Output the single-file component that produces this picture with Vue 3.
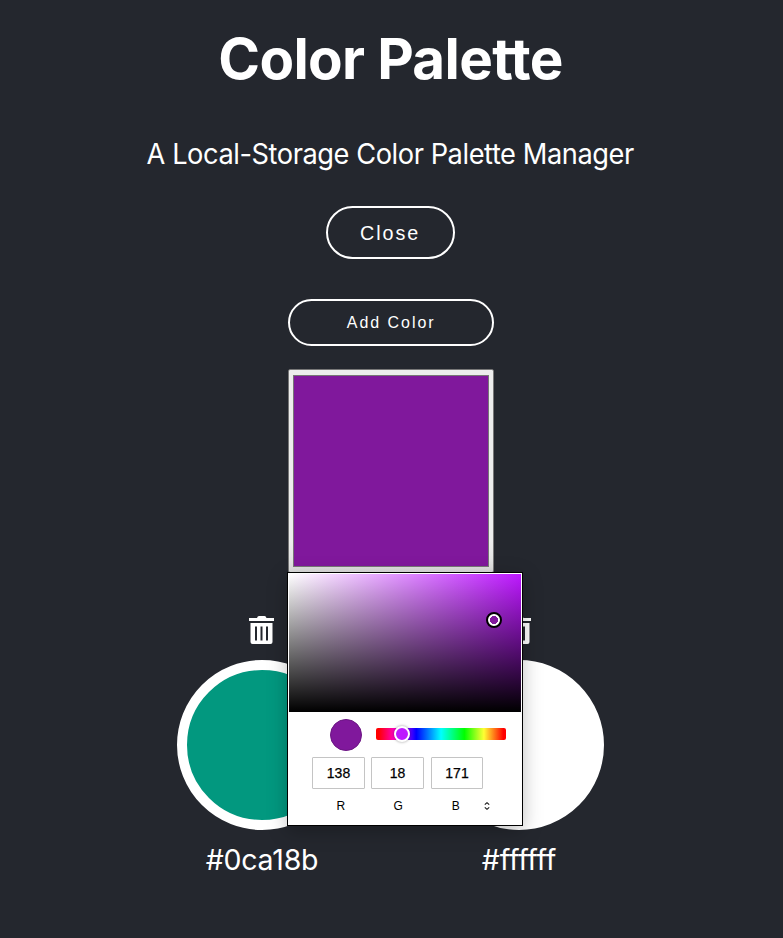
<script setup>
import { ref } from 'vue'

const cards = ref([
  { name: '#0ca18b', fill: '#02987f' },
  { name: '#ffffff', fill: '#ffffff' }
])
const channels = ref([
  { label: 'R', value: 138 },
  { label: 'G', value: 18 },
  { label: 'B', value: 171 }
])
</script>

<template>
  <main class="page">
    <h1 class="title">Color Palette</h1>
    <p class="subtitle">A Local-Storage Color Palette Manager</p>
    <button class="btn close"><span>Close</span></button>
    <form class="form" @submit.prevent>
      <button class="btn add"><span>Add Color</span></button>
      <div class="well">
        <div class="swatch"></div>
        <div class="picker">
          <div class="field"><i class="cursor"></i></div>
          <div class="hue-row">
            <div class="dot"></div>
            <div class="hue"><i class="thumb"></i></div>
          </div>
          <div class="channels">
            <span v-for="c in channels" :key="c.label" class="num">{{ c.value }}</span>
          </div>
          <div class="labels">
            <span v-for="c in channels" :key="c.label" class="lab">{{ c.label }}</span>
            <svg class="toggle" viewBox="0 0 8 10" width="8" height="10">
              <path d="M1.8 3.700 4 1.700 6.200 3.700M1.800 6.300 4 8.300 6.200 6.300" fill="none" stroke="#111" stroke-width="1.1" />
            </svg>
          </div>
        </div>
      </div>
    </form>
    <section class="cards">
      <article v-for="card in cards" :key="card.name" class="card">
        <svg class="trash" viewBox="0 0 26 28" width="26" height="28">
          <path fill="#fff" fill-rule="evenodd" d="M0 2H8Q8.500 0 10 0H15.500Q17 0 17.500 2H25V5H0ZM1.500 7H23.500V26Q23.500 28 21.500 28H3.500Q1.500 28 1.500 26ZM6 10.500V24.500H8V10.500ZM11.500 10.500V24.500H13.500V10.500ZM17 10.500V24.500H19V10.500Z" />
        </svg>
        <div class="circle" :style="{ backgroundColor: card.fill }"></div>
        <div class="name">{{ card.name }}</div>
      </article>
    </section>
  </main>
</template>

<style>
body {
  margin: 0;
  background: #24272e;
}
</style>

<style scoped>
.page {
  box-sizing: border-box;
  width: 781px;
  height: 938px;
  padding-top: 24px;
  display: flex;
  flex-direction: column;
  align-items: center;
  overflow: hidden;
  color: #fff;
  font-family: Inter, "Liberation Sans", sans-serif;
}
.title {
  margin: 0;
  font-size: 56.5px;
  line-height: 70px;
  font-weight: 700;
  letter-spacing: -.65px;
  white-space: nowrap;
}
.subtitle {
  margin: 42px 0 0;
  font-size: 28.2px;
  line-height: 36px;
  letter-spacing: -.45px;
  white-space: nowrap;
  transform: scaleX(.966);
}
.btn {
  box-sizing: border-box;
  border: 2px solid #fff;
  background: transparent;
  color: #fff;
  padding: 0;
  font-family: "Liberation Sans", Arial, sans-serif;
}
.btn span {
  display: inline-block;
  transform: scaleX(.94);
}
.close {
  width: 129px;
  height: 53px;
  margin-top: 34px;
  border-radius: 27px;
  font-size: 21px;
  letter-spacing: 2.1px;
}
.form {
  width: 206px;
  margin: 40px 0 0 1px;
}
.add {
  display: block;
  width: 206px;
  height: 47px;
  border-radius: 24px;
  font-size: 17px;
  letter-spacing: 2.1px;
}
.well {
  position: relative;
  box-sizing: border-box;
  width: 206px;
  height: 204px;
  margin-top: 23px;
  padding: 5px 4px 4px;
  border: 1px solid #777;
  border-radius: 2px;
  background: linear-gradient(#ededed, #ededed 85%, #dedede);
}
.swatch {
  box-sizing: border-box;
  height: 192px;
  border: 1px solid #777;
  background: #80189c;
}
.picker {
  position: absolute;
  z-index: 2;
  left: -2px;
  top: 202px;
  box-sizing: border-box;
  width: 236px;
  height: 254px;
  border: 1px solid #000;
  padding: 1px;
  background: #fff;
  color: #000;
  box-shadow: 0 5px 18px rgba(0, 0, 0, .26);
}
.field {
  position: relative;
  height: 138px;
  background: linear-gradient(to top, #000, transparent), linear-gradient(to right, #fff, #bd18ff);
}
.cursor {
  position: absolute;
  left: 197px;
  top: 38px;
  box-sizing: border-box;
  width: 16px;
  height: 16px;
  border: 2px solid #000;
  border-radius: 50%;
  background: radial-gradient(circle, #80189c 3.8px, #fff 4.3px);
}
.hue-row {
  display: flex;
  align-items: flex-start;
  gap: 14px;
  padding: 7px 0 0 41px;
}
.dot {
  box-sizing: border-box;
  width: 32px;
  height: 32px;
  border-radius: 50%;
  border: 1px solid #6c1584;
  background: #80189c;
}
.hue {
  position: relative;
  width: 130px;
  height: 12px;
  margin-top: 9px;
  border-radius: 2px;
  background: linear-gradient(to right, #f00 2%, #f0f 18%, #00f 31%, #0ff 50%, #0f0 68%, #ff3 83%, #f00 98%);
}
.thumb {
  position: absolute;
  left: 18px;
  top: -2px;
  box-sizing: border-box;
  width: 16px;
  height: 16px;
  border: 2px solid #fff;
  border-radius: 50%;
  background: #bd18ff;
  box-shadow: 0 0 3px rgba(0, 0, 0, .4);
}
.channels {
  display: flex;
  gap: 6px;
  padding: 6px 0 0 23px;
  font-family: "Liberation Sans", Arial, sans-serif;
}
.num {
  box-sizing: border-box;
  width: 53px;
  height: 32px;
  border: 1px solid #c4c4c4;
  border-radius: 1px;
  font-size: 14px;
  line-height: 30px;
  text-align: center;
  -webkit-text-stroke: .25px #000;
}
.num:last-child {
  width: 52px;
  margin-left: 1px;
}
.labels {
  display: flex;
  align-items: center;
  padding: 9px 0 0 23px;
  font-family: "Liberation Sans", Arial, sans-serif;
}
.lab {
  width: 57.5px;
  font-size: 12px;
  line-height: 16px;
  text-align: center;
}
.toggle {
  margin-left: -1.5px;
}
.cards {
  display: flex;
  gap: 87px;
  margin-top: 43px;
}
.card {
  width: 170px;
  display: flex;
  flex-direction: column;
  align-items: center;
}
.trash {
  display: block;
}
.circle {
  box-sizing: border-box;
  width: 170px;
  height: 170px;
  margin-top: 16px;
  border: 10px solid #fff;
  border-radius: 50%;
}
.name {
  margin-top: 12px;
  font-size: 28.5px;
  line-height: 36px;
  letter-spacing: -.2px;
  white-space: nowrap;
}
</style>
